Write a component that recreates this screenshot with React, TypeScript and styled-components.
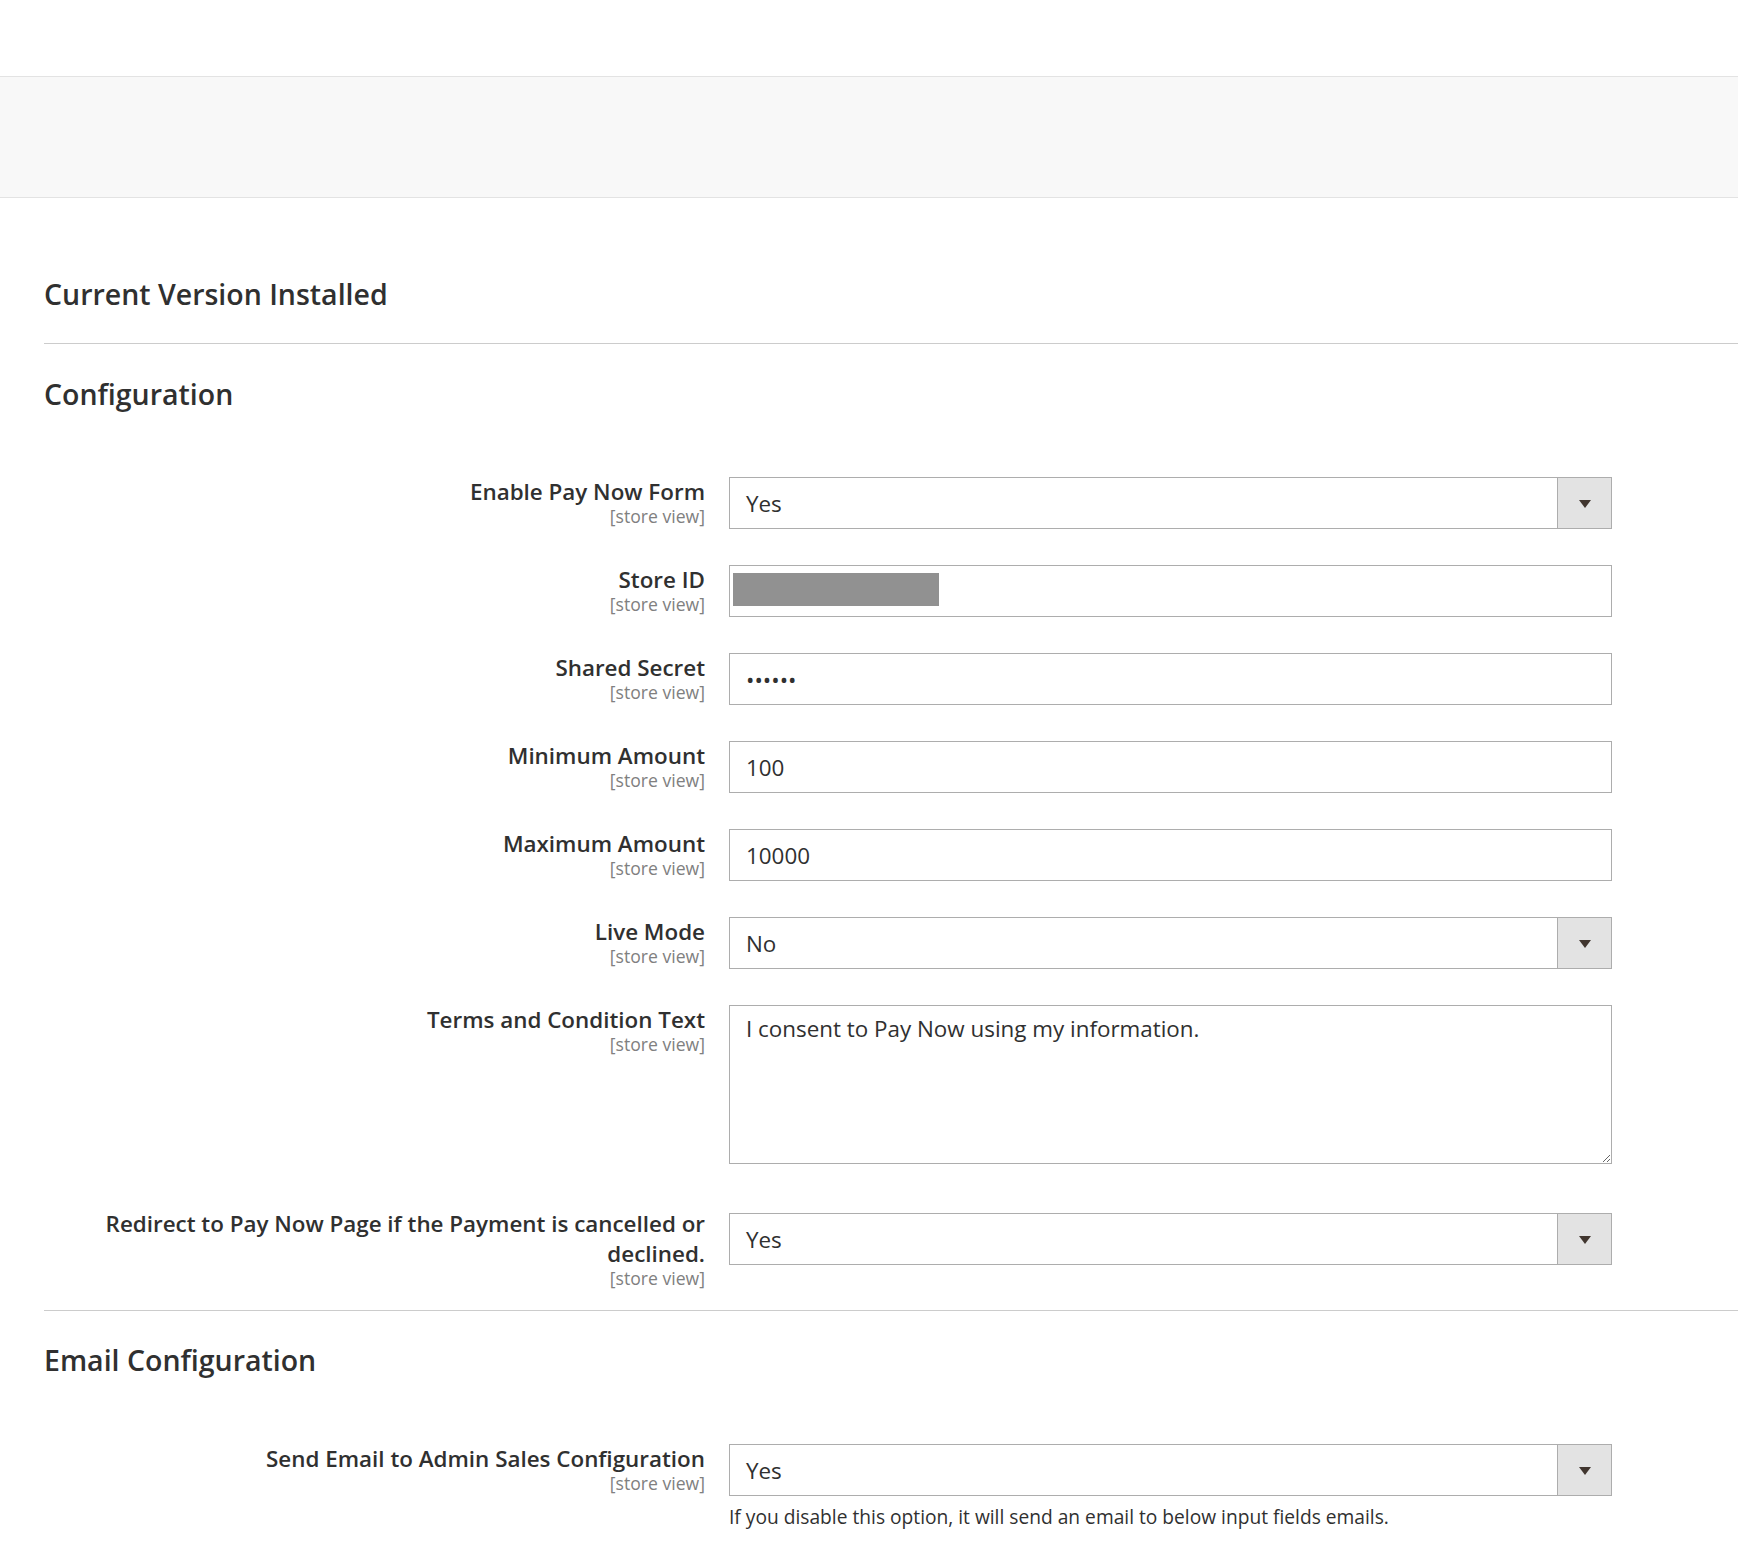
import React from 'react';
import styled, { createGlobalStyle } from 'styled-components';

const GlobalStyle = createGlobalStyle`
  html, body {
    margin: 0;
    padding: 0;
    background: #fff;
  }
  body {
    font-family: "Open Sans", "Noto Sans", sans-serif;
    color: #303030;
  }
  *, *::before, *::after {
    box-sizing: border-box;
  }
`;

const TopBar = styled.header`
    height: 77px;
    background: #fff;
    border-bottom: 1px solid #e3e3e3;
`;

const PageActions = styled.div`
    height: 121px;
    background: #f8f8f8;
    border-bottom: 1px solid #e3e3e3;
`;

const Main = styled.main`
    padding-left: 44px;
    padding-bottom: 20px;
`;

const SectionTitle = styled.h2<{ $top: number }>`
    margin: ${(p) => p.$top}px 0 0;
    font-size: 28.5px;
    line-height: 37px;
    font-weight: 600;
    color: #303030;
`;

const Divider = styled.div<{ $top: number }>`
    margin-top: ${(p) => p.$top}px;
    height: 1px;
    background: #cccccc;
`;

const FieldList = styled.div<{ $top: number }>`
    margin-top: ${(p) => p.$top}px;
    display: flex;
    flex-direction: column;
`;

const Row = styled.div<{ $after?: number }>`
    display: grid;
    grid-template-columns: 661px 883px;
    column-gap: 24px;
    align-items: start;
    margin-bottom: ${(p) => (p.$after ?? 36)}px;
`;

const LabelCell = styled.div<{ $lift?: number }>`
    margin-top: ${(p) => -(p.$lift ?? 0)}px;
    text-align: right;
`;

const LabelText = styled.label`
    display: block;
    font-size: 22.4px;
    line-height: 30px;
    font-weight: 600;
    color: #303030;
`;

const Scope = styled.span`
    display: block;
    margin-top: -2px;
    font-size: 17.6px;
    line-height: 22px;
    color: #808080;
`;

const Control = styled.div`
    display: flex;
    flex-direction: column;
`;

const FieldBox = styled.div`
    display: flex;
    align-items: center;
    height: 52px;
    padding: 0 16px;
    border: 1px solid #adadad;
    background: #fff;
    font-size: 22.4px;
    color: #303030;
`;

const TextInput = styled.input`
    display: block;
    width: 100%;
    height: 52px;
    padding: 0 16px;
    border: 1px solid #adadad;
    border-radius: 0;
    background: #fff;
    font-family: "Open Sans", "Noto Sans", sans-serif;
    font-size: 22.4px;
    color: #303030;
    outline: none;
`;

const MaskedBox = styled(FieldBox)`
    align-items: flex-start;
    padding: 7px 0 0 3px;
`;

const Redaction = styled.span`
    width: 206px;
    height: 33px;
    background: #919191;
`;

const SelectBox = styled.div`
    display: flex;
    height: 52px;
    border: 1px solid #adadad;
    background: #fff;
`;

const SelectValue = styled.span`
    flex: 1;
    display: flex;
    align-items: center;
    padding: 0 16px;
    font-size: 22.4px;
    color: #303030;
`;

const SelectArrow = styled.span`
    width: 54px;
    display: flex;
    align-items: center;
    justify-content: center;
    border-left: 1px solid #adadad;
    background: #e3e3e3;

    &::after {
        content: '';
        margin-top: 1px;
        border-left: 6.5px solid transparent;
        border-right: 6.5px solid transparent;
        border-top: 8px solid #41362f;
    }
`;

const TextArea = styled.textarea`
    display: block;
    width: 100%;
    height: 159px;
    padding: 8px 16px;
    border: 1px solid #adadad;
    border-radius: 0;
    background: #fff;
    font-family: "Open Sans", "Noto Sans", sans-serif;
    font-size: 22.4px;
    line-height: 30px;
    color: #303030;
    resize: vertical;
    outline: none;
`;

const Hint = styled.p`
    margin: 8px 0 0;
    font-size: 19.2px;
    line-height: 26px;
    color: #303030;
`;

interface IFieldLabelProps {
    text: string
    lift?: number
}

const FieldLabel: React.FC<IFieldLabelProps> = ({ text, lift }) => (
    <LabelCell $lift={lift}>
        <LabelText>{text}</LabelText>
        <Scope>[store view]</Scope>
    </LabelCell>
);

const Select: React.FC<{ value: string }> = ({ value }) => (
    <SelectBox>
        <SelectValue>{value}</SelectValue>
        <SelectArrow />
    </SelectBox>
);

const App: React.FC = () => {
    return (
        <>
            <GlobalStyle />
            <TopBar />
            <PageActions />

            <Main>
                <SectionTitle $top={78}>Current Version Installed</SectionTitle>
                <Divider $top={30} />

                <SectionTitle $top={32}>Configuration</SectionTitle>
                <FieldList $top={64}>
                    <Row>
                        <FieldLabel text="Enable Pay Now Form" />
                        <Control><Select value="Yes" /></Control>
                    </Row>

                    <Row>
                        <FieldLabel text="Store ID" />
                        <Control>
                            <MaskedBox><Redaction /></MaskedBox>
                        </Control>
                    </Row>

                    <Row>
                        <FieldLabel text="Shared Secret" />
                        <Control><FieldBox>••••••</FieldBox></Control>
                    </Row>

                    <Row>
                        <FieldLabel text="Minimum Amount" />
                        <Control><TextInput readOnly value="100" /></Control>
                    </Row>

                    <Row>
                        <FieldLabel text="Maximum Amount" />
                        <Control><TextInput readOnly value="10000" /></Control>
                    </Row>

                    <Row>
                        <FieldLabel text="Live Mode" />
                        <Control><Select value="No" /></Control>
                    </Row>

                    <Row $after={49}>
                        <FieldLabel text="Terms and Condition Text" />
                        <Control>
                            <TextArea readOnly value="I consent to Pay Now using my information." />
                        </Control>
                    </Row>

                    <Row $after={0}>
                        <FieldLabel
                            text="Redirect to Pay Now Page if the Payment is cancelled or declined."
                            lift={4}
                        />
                        <Control><Select value="Yes" /></Control>
                    </Row>
                </FieldList>
                <Divider $top={21} />

                <SectionTitle $top={31}>Email Configuration</SectionTitle>
                <FieldList $top={65}>
                    <Row $after={0}>
                        <FieldLabel text="Send Email to Admin Sales Configuration" />
                        <Control>
                            <Select value="Yes" />
                            <Hint>If you disable this option, it will send an email to below input fields emails.</Hint>
                        </Control>
                    </Row>
                </FieldList>
            </Main>
        </>
    );
}

export default App;
